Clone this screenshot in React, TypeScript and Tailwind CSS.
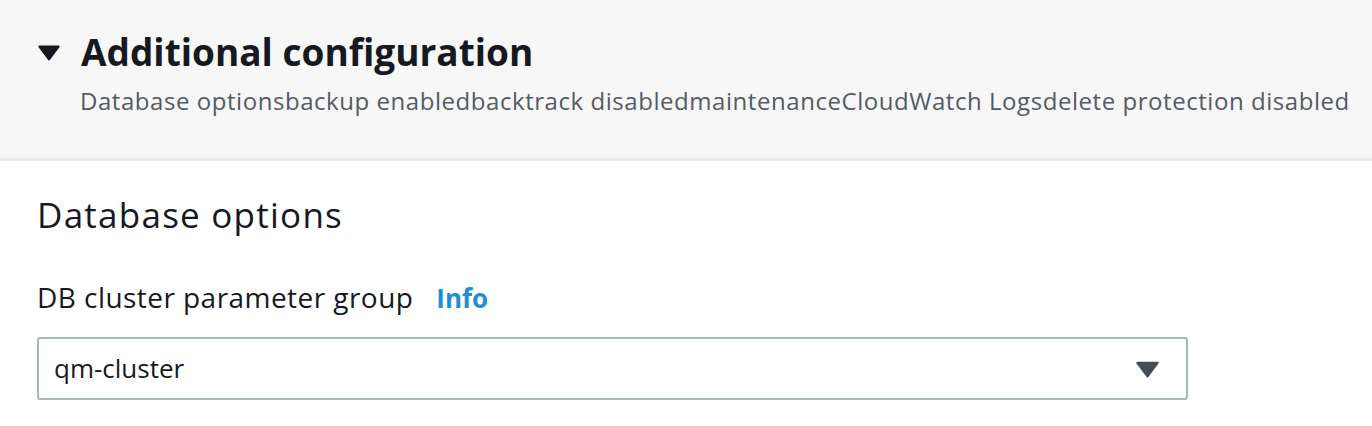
import { ReactNode } from "react";

const font = { fontFamily: "'Open Sans', 'Noto Sans', sans-serif" };

function CaretDown({ className }: { className?: string }) {
  return (
    <svg viewBox="0 0 20 16" className={className} fill="currentColor">
      <path d="M1 2.5h18L10 14.5z" strokeLinejoin="round" stroke="currentColor" strokeWidth="2" />
    </svg>
  );
}

function Field({ label, children }: { label: string; children: ReactNode }) {
  return (
    <div>
      <div className="flex items-baseline gap-[23px] text-[28px] leading-[34px] tracking-[0.45px] text-[#16191f]">
        {label}
        <span className="text-[26px] font-bold tracking-normal text-[#1f8fd1]">Info</span>
      </div>
      <div className="mt-[22px]">{children}</div>
    </div>
  );
}

export default function App() {
  return (
    <div className="h-[426px] w-[1372px] overflow-hidden bg-white" style={font}>
      {/* Expandable section header */}
      <div className="h-[161px] border-b-[3px] border-[#e9ebeb] bg-[#f7f7f7] pl-[38px] pt-[27px]">
        <div className="flex items-center gap-[21px]">
          <CaretDown className="h-[17px] w-[22px] text-[#16191f]" />
          <h2 className="text-[37px] font-bold leading-[50px] text-[#16191f]">Additional configuration</h2>
        </div>
        <p className="mt-[8px] pl-[42px] text-[24px] leading-[32px] tracking-[0.55px] text-[#545b64]">
          Database optionsbackup enabledbacktrack disabledmaintenanceCloudWatch Logsdelete protection disabled
        </p>
      </div>

      {/* Database options */}
      <div className="px-[37px] pt-[32px]">
        <h3 className="text-[35px] leading-[44px] tracking-[1.25px] text-[#16191f]">Database options</h3>
        <div className="mt-[43px]">
          <Field label="DB cluster parameter group">
            <div className="flex h-[63px] w-[1151px] items-center justify-between rounded-[3px] border-2 border-[#aab7b8] pl-[15px] pr-[27px]">
              <span className="text-[26px] text-[#16191f]">qm-cluster</span>
              <CaretDown className="h-[18px] w-[23px] text-[#474d56]" />
            </div>
          </Field>
        </div>
      </div>
    </div>
  );
}
